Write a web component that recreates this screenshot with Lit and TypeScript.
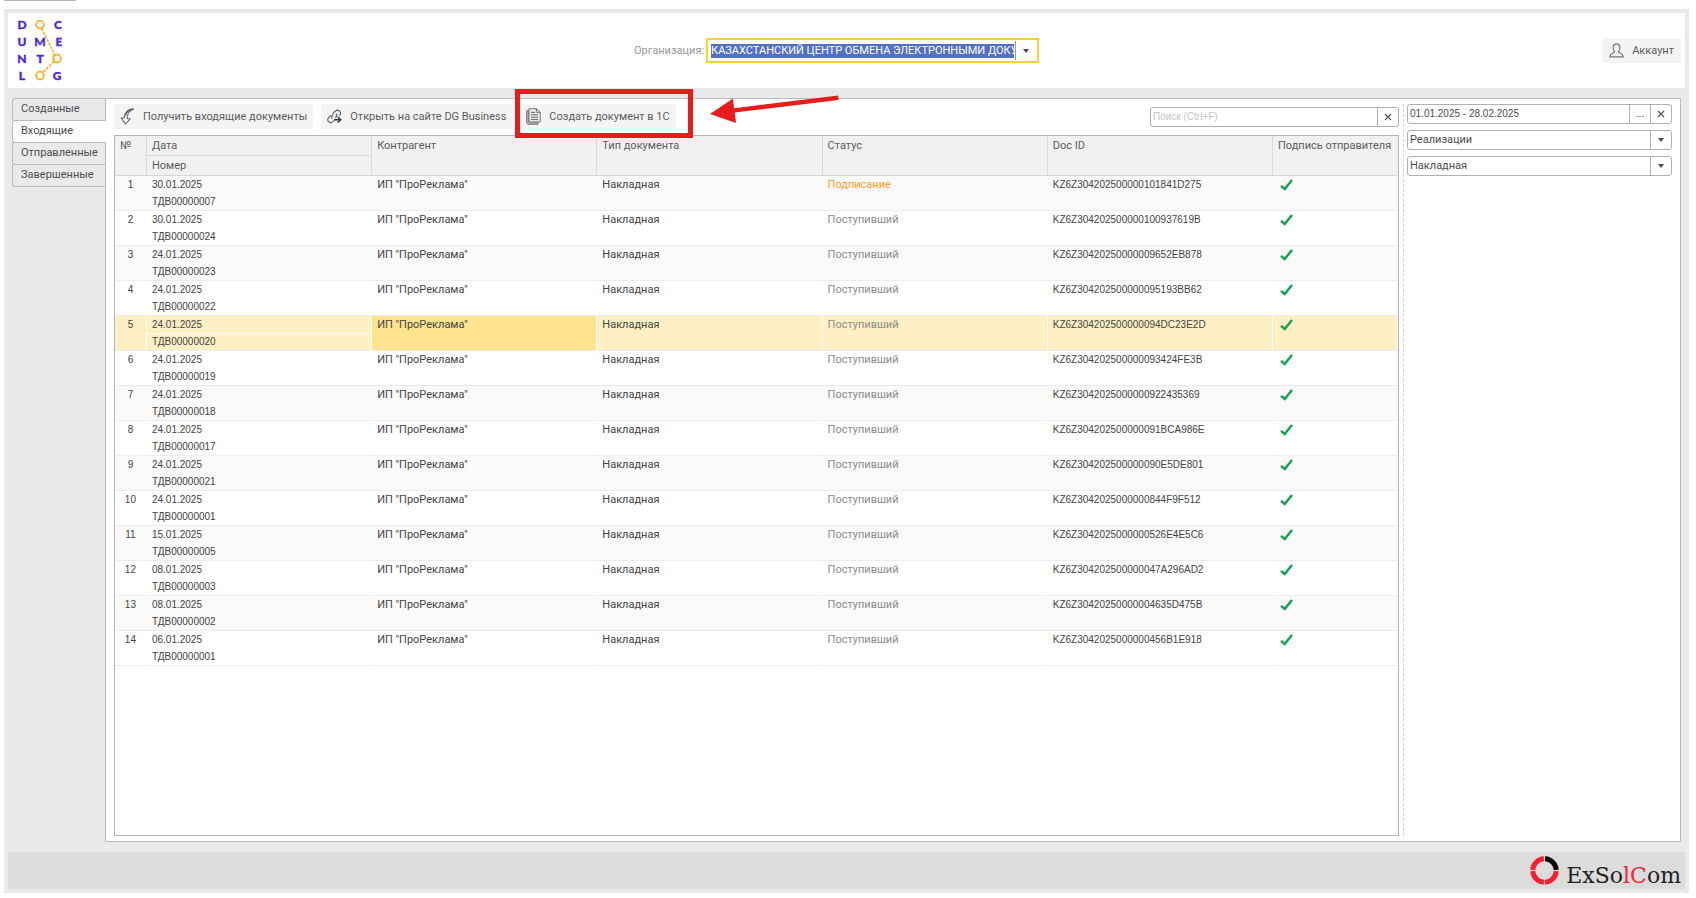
import { LitElement, html, svg, css } from "lit";
import { customElement, state } from "lit/decorators.js";
import { classMap } from "lit/directives/class-map.js";

interface Doc {
  date: string;
  num: string;
  id: string;
  status: string;
}

const WAITING = "Поступивший";
const SIGNING = "Подписание";

const DOCS: Doc[] = [
  ["30.01.2025", "00000007", "KZ6Z304202500000101841D275", SIGNING],
  ["30.01.2025", "00000024", "KZ6Z304202500000100937619B", WAITING],
  ["24.01.2025", "00000023", "KZ6Z30420250000009652EB878", WAITING],
  ["24.01.2025", "00000022", "KZ6Z304202500000095193BB62", WAITING],
  ["24.01.2025", "00000020", "KZ6Z304202500000094DC23E2D", WAITING],
  ["24.01.2025", "00000019", "KZ6Z304202500000093424FE3B", WAITING],
  ["24.01.2025", "00000018", "KZ6Z3042025000000922435369", WAITING],
  ["24.01.2025", "00000017", "KZ6Z304202500000091BCA986E", WAITING],
  ["24.01.2025", "00000021", "KZ6Z304202500000090E5DE801", WAITING],
  ["24.01.2025", "00000001", "KZ6Z3042025000000844F9F512", WAITING],
  ["15.01.2025", "00000005", "KZ6Z3042025000000526E4E5C6", WAITING],
  ["08.01.2025", "00000003", "KZ6Z304202500000047A296AD2", WAITING],
  ["08.01.2025", "00000002", "KZ6Z30420250000004635D475B", WAITING],
  ["06.01.2025", "00000001", "KZ6Z3042025000000456B1E918", WAITING],
].map(([date, num, id, status]) => ({ date, num: "ТДВ" + num, id, status }));

const TABS = ["Созданные", "Входящие", "Отправленные", "Завершенные"];

const check = html`<svg class="check" width="13" height="12" viewBox="0 0 13 12" role="img" aria-label="Подписано">
  <path d="M1 6.8 L4.7 10 L12 0.9" fill="none" stroke="#12a150" stroke-width="2.4" />
</svg>`;

const cross = html`<svg width="8" height="8" viewBox="0 0 8 8" aria-hidden="true">
  <path d="M1 1 L7 7 M7 1 L1 7" stroke="#555" stroke-width="1.2" />
</svg>`;

const caret = html`<svg width="6" height="4" viewBox="0 0 6 4" aria-hidden="true">
  <path d="M0 0 H6 L3 4 Z" fill="#4a4a4a" />
</svg>`;

@customElement("documentolog-logo")
export class DocumentologLogo extends LitElement {
  static styles = css`
    :host { display: block; width: 50px; height: 66px; }
    .letter { font: 900 12px Lato, sans-serif; fill: #4a26e0; stroke: #4a26e0; stroke-width: 0.3px; text-anchor: middle; }
  `;

  render() {
    const letters: [string, number, number][] = [
      ["D", 10, 13], ["C", 46, 13],
      ["U", 10, 30], ["M", 28, 30], ["E", 47, 30],
      ["N", 10, 47], ["T", 28, 47],
      ["L", 10, 64], ["G", 45, 64],
    ];
    return html`<svg width="50" height="66" viewBox="0 0 50 66" role="img" aria-label="Documentolog">
      ${letters.map(([t, x, y]) => svg`<text class="letter" x=${x} y=${y}>${t}</text>`)}
      <g fill="none" stroke="#f7b32b" stroke-width="1.8">
        <circle cx="28" cy="8.6" r="3.9" />
        <circle cx="45" cy="42.6" r="3.9" />
        <circle cx="28" cy="59.6" r="3.9" />
        <path d="M29.7 12.5 L43 39" stroke-dasharray="2.8 1.2" />
        <path d="M42 45.5 L31 56.5" stroke-dasharray="2.8 1.2" />
        <path d="M40.5 38.5 L42 39.5 V46" stroke-width="1.4" />
      </g>
    </svg>`;
  }
}

@customElement("exsolcom-logo")
export class ExSolComLogo extends LitElement {
  static styles = css`
    :host { display: flex; align-items: flex-end; gap: 7px; color: #222; }
    .name { font: 22px/18px "DejaVu Serif", serif; }
    .red { color: #fb2331; }
  `;

  render() {
    return html`
      <svg width="29" height="29" viewBox="0 0 29 29" aria-hidden="true">
        <g fill="none" stroke="#fb1d2c" stroke-width="5">
          <path d="M13.9 2.8 A11.7 11.7 0 0 0 2.8 13.9" />
          <path d="M2.8 15.1 A11.7 11.7 0 0 0 13.9 26.2" />
          <path d="M15.1 26.2 A11.7 11.7 0 0 0 26.2 15.1" />
          <path d="M15.1 2.8 A11.7 11.7 0 0 1 26.2 13.9" stroke="#000" />
        </g>
      </svg>
      <span class="name">ExSo<span class="red">lC</span>om</span>
    `;
  }
}

@customElement("app-root")
export class AppRoot extends LitElement {
  @state() private tab = 1;
  @state() private selected = 4;

  static styles = css`
    :host {
      display: flex;
      flex-direction: column;
      box-sizing: border-box;
      min-height: 100vh;
      padding: 0 7px 5px 4px;
      background: #fff;
      color: #4d4d4d;
      font: 11px/16px Roboto, "Liberation Sans", sans-serif;
    }
    * { box-sizing: border-box; }
    button, input, select { font: inherit; color: inherit; margin: 0; }
    button { border: 0; padding: 0; background: none; }
    input, select { border: 0; padding: 0; outline: 0; background: none; min-width: 0; }
    select { appearance: none; }

    .stub { width: 72px; height: 1px; margin-bottom: 8px; background: #b2b2b2; border-radius: 0 0 2px 2px; }
    .window { flex: 1; display: flex; flex-direction: column; padding: 4px; background: #eaeaea; }

    .header {
      display: grid;
      grid-template-columns: 1fr auto 1fr;
      align-items: center;
      height: 75px;
      padding: 0 4px;
      background: #fff;
    }
    .logo { align-self: start; margin-top: 3px; }
    .org { display: flex; align-items: center; gap: 2px; margin-right: 20px; color: #999; }
    .org-box { display: flex; align-items: center; width: 333px; height: 25px; padding-left: 3px; border: 2px solid #fbd130; }
    .org-input { width: 303px; height: 14px; background: #5470c6; color: #fff; }
    .org-drop { width: 20px; height: 19px; margin-left: 1px; border-left: 1px solid #999; display: grid; place-items: center; }

    .tool { display: flex; align-items: center; height: 25px; background: #f4f4f4; color: #5c5c5c; white-space: nowrap; }
    .tool svg { flex: none; }
    .account { justify-self: end; gap: 8px; padding: 0 7px; }

    .work { flex: 1; display: flex; padding: 10px 4px; }
    .tabs { display: flex; flex-direction: column; flex: none; }
    .tab {
      height: 23px;
      margin-bottom: -1px;
      padding: 0 7px 1px 8px;
      border: 1px solid #bcbcbc;
      border-right: 0;
      border-radius: 3px 0 0 3px;
      background: #eaeaea;
      text-align: left;
    }
    .tab.active { margin-right: -1px; background: #fff; position: relative; }
    .panel { flex: 1; min-width: 0; display: flex; padding: 5px 8px; border: 1px solid #bcbcbc; background: #fff; }

    .main { flex: 1; min-width: 0; display: flex; flex-direction: column; gap: 6px; }
    .toolbar { display: flex; align-items: center; gap: 8px; height: 25px; }
    .toolbar .tool { gap: 8px; padding: 0 6px; }
    .marked { position: relative; }
    .frame { position: absolute; inset: -15px -17px -9px -5px; border: 5px solid #e81c1c; pointer-events: none; }
    .arrow { position: absolute; left: 189px; top: -9px; pointer-events: none; }

    .field { display: flex; height: 20px; border: 1px solid #b0b0b0; border-radius: 3px; background: #fff; }
    .field input, .field select { flex: 1; padding-left: 2px; }
    .field input::placeholder { color: #c4c4c4; opacity: 1; }
    .field-btn { flex: none; width: 21px; border-left: 1px solid #b0b0b0; display: grid; place-items: center; }
    .search { width: 249px; margin-left: auto; }

    .list { flex: 1; border: 1px solid #b5b5b5; }
    .grid { width: 100%; table-layout: fixed; border-collapse: separate; border-spacing: 0; }
    .c-num { width: 32px; }
    .c-sign { width: 125px; }
    th { height: 20px; padding: 1px 4px 0; background: #f1f1f1; border-right: 1px solid #dadada; border-bottom: 1px solid #d6d6d6; font-weight: 400; line-height: 18px; text-align: left; vertical-align: top; color: #5c5c5c; white-space: nowrap; }
    tr:first-child > th:last-child { border-right-color: #f1f1f1; }
    td { height: 35px; padding: 0 5px; border-right: 1px solid transparent; border-bottom: 1px solid #ececec; line-height: 17px; vertical-align: top; white-space: nowrap; color: #444; background-clip: padding-box; }
    th { padding-left: 5px; }
    .row:nth-child(odd) { background: #fafafa; }
    .row.sel { background: #fff; }
    .row.sel td { background-color: #fdf0c5; }
    .row.sel .cur { background-color: #fee48e; }
    .row .n { padding: 0; text-align: center; }
    .line { display: block; margin: 0 -5px; padding: 0 5px; }
    .row.sel .line:first-child { box-shadow: 0 1px #fff; }
    .code { font-family: "Liberation Sans", sans-serif; font-size: 10px; }
    .status { color: #8c8c8c; }
    .status.signing { color: #ff9c1a; }
    .check { display: block; margin: 3px 0 0 2px; }

    .filters { width: 269px; flex: none; display: flex; flex-direction: column; gap: 6px; margin-left: 4px; padding-left: 3px; border-left: 1px dashed #d4d4d4; }
    .footer { display: flex; align-items: center; justify-content: flex-end; height: 37px; padding-right: 4px; background: #dcdcdc; }
  `;

  private row(d: Doc, i: number) {
    return html`<tr class=${classMap({ row: true, sel: i === this.selected })} @click=${() => (this.selected = i)}>
      <td class="n code">${i + 1}</td>
      <td class="code"><span class="line">${d.date}</span><span class="line">${d.num}</span></td>
      <td class="cur">ИП "ПроРеклама"</td>
      <td>Накладная</td>
      <td class=${classMap({ status: true, signing: d.status === SIGNING })}>${d.status}</td>
      <td class="code">${d.id}</td>
      <td>${check}</td>
    </tr>`;
  }

  render() {
    return html`
      <div class="stub"></div>
      <div class="window">
        <header class="header">
          <documentolog-logo class="logo"></documentolog-logo>
          <div class="org">
            <label for="org">Организация:</label>
            <div class="org-box">
              <input id="org" class="org-input" value="КАЗАХСТАНСКИЙ ЦЕНТР ОБМЕНА ЭЛЕКТРОННЫМИ ДОКУМЕНТАМИ" />
              <button class="org-drop" aria-label="Выбрать организацию">${caret}</button>
            </div>
          </div>
          <button class="tool account">
            <svg width="15" height="15" viewBox="0 0 15 15" fill="none" stroke="#777" stroke-width="1.2">
              <path d="M5.6 8.6 C4.2 7 3.9 5.3 4.1 3.9 C4.3 1.8 5.7 0.8 7.5 0.8 C9.3 0.8 10.7 1.8 10.9 3.9 C11.1 5.3 10.8 7 9.4 8.6 C9.4 10.2 14.2 9.8 14.2 13.9 H0.8 C0.8 9.8 5.6 10.2 5.6 8.6 Z" />
            </svg>
            Аккаунт
          </button>
        </header>

        <div class="work">
          <nav class="tabs" role="tablist">
            ${TABS.map(
              (t, i) => html`<button
                role="tab"
                aria-selected=${i === this.tab}
                class=${classMap({ tab: true, active: i === this.tab })}
                @click=${() => (this.tab = i)}
              >${t}</button>`
            )}
          </nav>
          <main class="panel">
            <section class="main">
              <div class="toolbar">
                <button class="tool">
                  <svg width="15" height="17" viewBox="0 0 15 17" fill="#fff" stroke="#666" stroke-width="1.1" stroke-linejoin="round">
                    <path d="M13.5 1 C8.5 0.8 4.6 4 4.3 10 H1.2 L5.6 16 L10.2 10.8 H7.3 C7.2 6.2 9 2.6 13.5 1 Z" />
                    <path d="M13.5 1 C9.6 1.4 6.6 3.6 5.4 7.4" stroke-width="1.6" fill="none" />
                  </svg>
                  Получить входящие документы
                </button>
                <button class="tool">
                  <svg width="15" height="15" viewBox="0 0 17 16" fill="none" stroke="#666" stroke-width="1.3" stroke-linecap="round">
                    <path d="M6.2 5.2 L9 2.3 C10.6 0.7 12.8 0.6 14.2 2 C15.6 3.4 15.5 5.4 14.3 6.9" />
                    <path d="M10.6 5.2 C11.6 6.8 11.2 8 9.8 9.2" />
                    <path d="M4.2 7 L2 9.2 C0.5 10.8 0.5 12.6 1.8 13.9 C3.2 15.3 5.2 15.2 6.7 13.8 L7.8 12.7" />
                    <path d="M5.6 10.4 C4.8 9 5.2 7.9 6.4 6.9" />
                    <path d="M8.6 11.6 H15.2 M12.6 8.8 L15.6 11.6 L12.6 14.4" stroke="#333" stroke-width="1.6" />
                  </svg>
                  Открыть на сайте DG Business
                </button>
                <div class="marked">
                  <button class="tool">
                    <svg width="15" height="17" viewBox="0 0 15 17">
                      <path d="M0.7 2.6 H3 V14 H12 V16.3 H2 L0.7 15 Z" fill="#b4b4b4" stroke="#777" />
                      <path d="M3 0.7 H10.6 L14.3 4.2 V14 H3 Z" fill="#ececec" stroke="#777" />
                      <path d="M10.4 0.8 V4.4 H14.2" fill="none" stroke="#777" />
                      <path d="M5 4.4 H9 M5 6.8 H12.2 M5 9.2 H12.2 M5 11.6 H12.2" stroke="#666" />
                    </svg>
                    Создать документ в 1С
                  </button>
                  <div class="frame"></div>
                  <svg class="arrow" width="132" height="32" viewBox="0 0 132 32" aria-hidden="true">
                    <path d="M1 19 L24 3.5 L25 13.2 L129 0.4 L129.6 5 L25.8 17.6 L27 28 Z" fill="#e81c1c" />
                  </svg>
                </div>
                <div class="field search">
                  <input class="code" aria-label="Поиск" placeholder="Поиск (Ctrl+F)" />
                  <button class="field-btn" aria-label="Очистить поиск">${cross}</button>
                </div>
              </div>

              <div class="list">
                <table class="grid">
                  <colgroup>
                    <col class="c-num" /><col /><col /><col /><col /><col /><col class="c-sign" />
                  </colgroup>
                  <thead>
                    <tr>
                      <th rowspan="2">№</th>
                      <th>Дата</th>
                      <th rowspan="2">Контрагент</th>
                      <th rowspan="2">Тип документа</th>
                      <th rowspan="2">Статус</th>
                      <th rowspan="2">Doc ID</th>
                      <th rowspan="2">Подпись отправителя</th>
                    </tr>
                    <tr><th>Номер</th></tr>
                  </thead>
                  <tbody>${DOCS.map((d, i) => this.row(d, i))}</tbody>
                </table>
              </div>
            </section>

            <aside class="filters">
              <div class="field">
                <input aria-label="Период" class="code" value="01.01.2025 - 28.02.2025" />
                <button class="field-btn" aria-label="Выбрать период">...</button>
                <button class="field-btn" aria-label="Очистить период">${cross}</button>
              </div>
              <label class="field">
                <select aria-label="Вид операции"><option>Реализации</option></select>
                <span class="field-btn">${caret}</span>
              </label>
              <label class="field">
                <select aria-label="Тип документа"><option>Накладная</option></select>
                <span class="field-btn">${caret}</span>
              </label>
            </aside>
          </main>
        </div>

        <footer class="footer"><exsolcom-logo></exsolcom-logo></footer>
      </div>
    `;
  }
}
